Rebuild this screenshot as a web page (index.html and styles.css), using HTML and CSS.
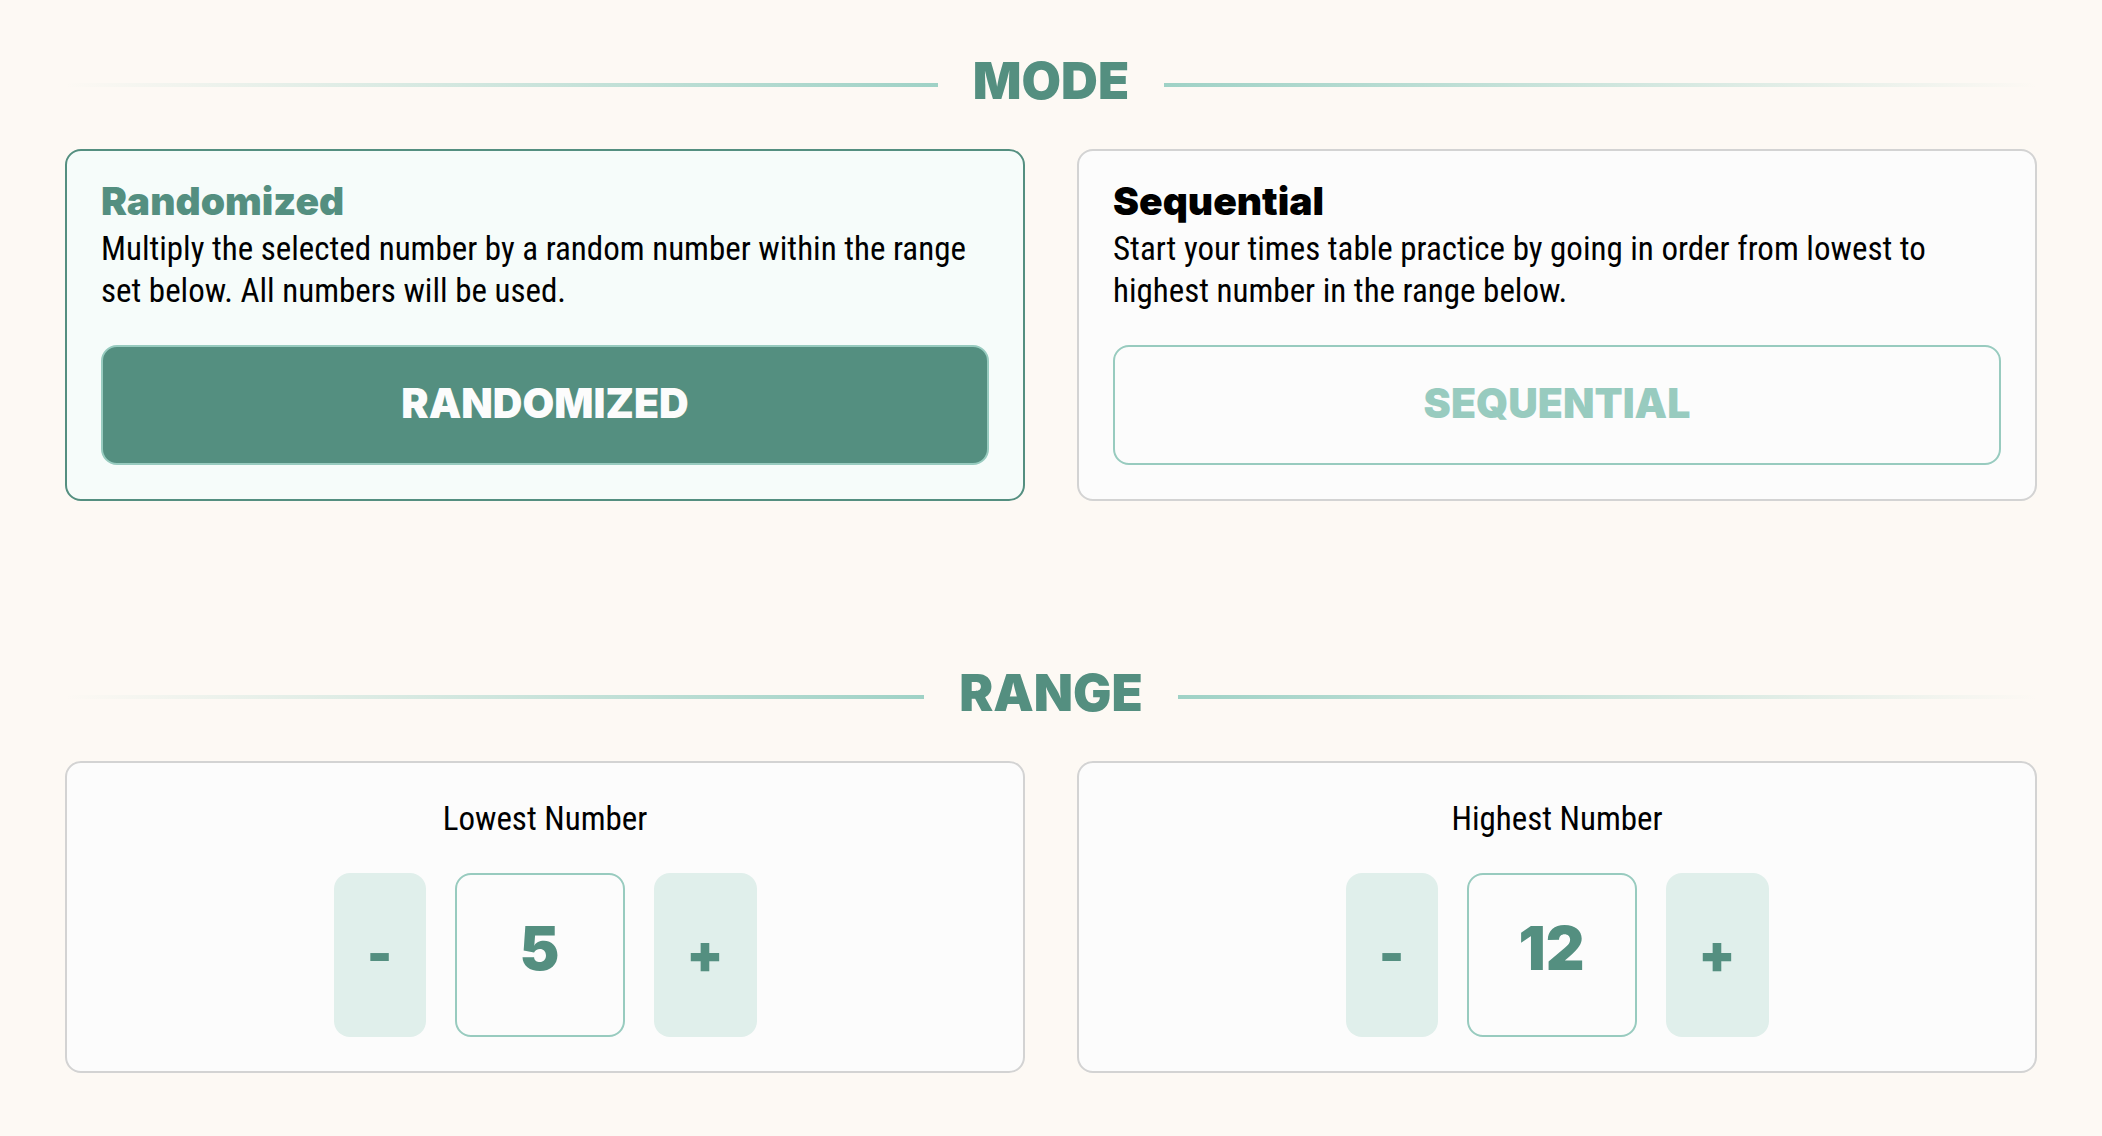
FILE: index.html
```html
<!DOCTYPE html>
<html lang="en">
<head>
    <meta charset="UTF-8">
    <meta name="viewport" content="width=device-width, initial-scale=1.0">
    <title>Times Table Practice</title>
    <link rel="stylesheet" href="styles.css">
</head>
<body>
    <main class="settings">
        <section>
            <h2 class="section-title">Mode</h2>
            <div class="cards">
                <div class="card mode selected">
                    <h3>Randomized</h3>
                    <p>Multiply the selected number by a random number within the range set below. All numbers will be used.</p>
                    <button type="button" class="mode-btn">Randomized</button>
                </div>
                <div class="card mode">
                    <h3>Sequential</h3>
                    <p>Start your times table practice by going in order from lowest to highest number in the range below.</p>
                    <button type="button" class="mode-btn">Sequential</button>
                </div>
            </div>
        </section>

        <section>
            <h2 class="section-title">Range</h2>
            <div class="cards">
                <div class="card range">
                    <label for="lowest">Lowest Number</label>
                    <div class="stepper">
                        <button type="button" class="minus" onclick="step('lowest', -1)">-</button>
                        <input type="text" inputmode="numeric" id="lowest" value="5">
                        <button type="button" class="plus" onclick="step('lowest', 1)">+</button>
                    </div>
                </div>
                <div class="card range">
                    <label for="highest">Highest Number</label>
                    <div class="stepper">
                        <button type="button" class="minus" onclick="step('highest', -1)">-</button>
                        <input type="text" inputmode="numeric" id="highest" value="12">
                        <button type="button" class="plus" onclick="step('highest', 1)">+</button>
                    </div>
                </div>
            </div>
        </section>
    </main>

    <script>
        // Highlight the chosen mode
        const modes = document.querySelectorAll('.mode');
        modes.forEach(card => {
            card.querySelector('button').addEventListener('click', () => {
                modes.forEach(c => c.classList.toggle('selected', c === card));
            });
        });

        function step(id, amount) {
            const input = document.getElementById(id);
            input.value = Math.max(0, (parseInt(input.value) || 0) + amount);
        }
    </script>
</body>
</html>
```

FILE: styles.css
```css
:root {
    --green: #548f80;
    --green-light: #98cbbf;
    --green-pale: #e0efeb;
    --cream: #fdf9f4;
    --white: #fcfcfc;
    --grey: #d3d3d3;
}
* {
    box-sizing: border-box;
}
body {
    margin: 0;
    background-color: var(--cream);
    color: #000;
    font-family: "Roboto Condensed", Roboto, sans-serif;
    font-size: 33px;
    line-height: 42px;
}
h2, h3, button, input {
    font-family: Inter, sans-serif;
    font-weight: 900;
}
h2, h3, p {
    margin: 0;
}
.settings {
    display: flex;
    flex-direction: column;
    gap: 162px;
    padding: 51px 65px 60px;
}

/* Section title with a fading line on each side */
.section-title {
    display: flex;
    align-items: center;
    gap: 35px;
    margin-bottom: 38px;
    color: var(--green);
    font-size: 51px;
    line-height: 60px;
    text-transform: uppercase;
}
.section-title::before,
.section-title::after {
    content: "";
    flex: 1;
    height: 4px;
    margin-top: 8px;
    background: linear-gradient(to right, transparent, #9fd2c6);
}
.section-title::after {
    background: linear-gradient(to left, transparent, #9fd2c6);
}

.cards {
    display: grid;
    grid-template-columns: 1fr 1fr;
    gap: 52px;
}
.card {
    padding: 34px;
    background-color: var(--white);
    border: 2px solid var(--grey);
    border-radius: 16px;
}
.card h3 {
    margin-bottom: 11px;
    font-size: 39px;
    line-height: 32px;
}
.mode-btn {
    display: block;
    width: 100%;
    height: 120px;
    margin-top: 33px;
    padding: 0 0 4px;
    background-color: transparent;
    border: 2px solid var(--green-light);
    border-radius: 16px;
    color: var(--green-light);
    font-size: 41px;
    text-transform: uppercase;
    cursor: pointer;
}
.selected {
    background-color: #f6fcfa;
    border-color: var(--green);
}
.selected h3 {
    color: var(--green);
}
.selected .mode-btn {
    background-color: var(--green);
    color: var(--white);
}

.range {
    text-align: center;
}
.range label {
    display: block;
    margin-bottom: 32px;
    line-height: 44px;
}
.stepper {
    display: flex;
    justify-content: center;
    gap: 29px;
}
.stepper button,
.stepper input {
    height: 164px;
    border-radius: 16px;
    color: var(--green);
}
.stepper button {
    padding: 0 0 4px;
    background-color: var(--green-pale);
    border: none;
    font-size: 54px;
    cursor: pointer;
}
.minus {
    width: 92px;
}
.plus {
    width: 103px;
}
.stepper input {
    width: 170px;
    padding: 0 0 14px;
    background-color: var(--white);
    border: 2px solid var(--green-light);
    font-size: 60px;
    text-align: center;
}
```
